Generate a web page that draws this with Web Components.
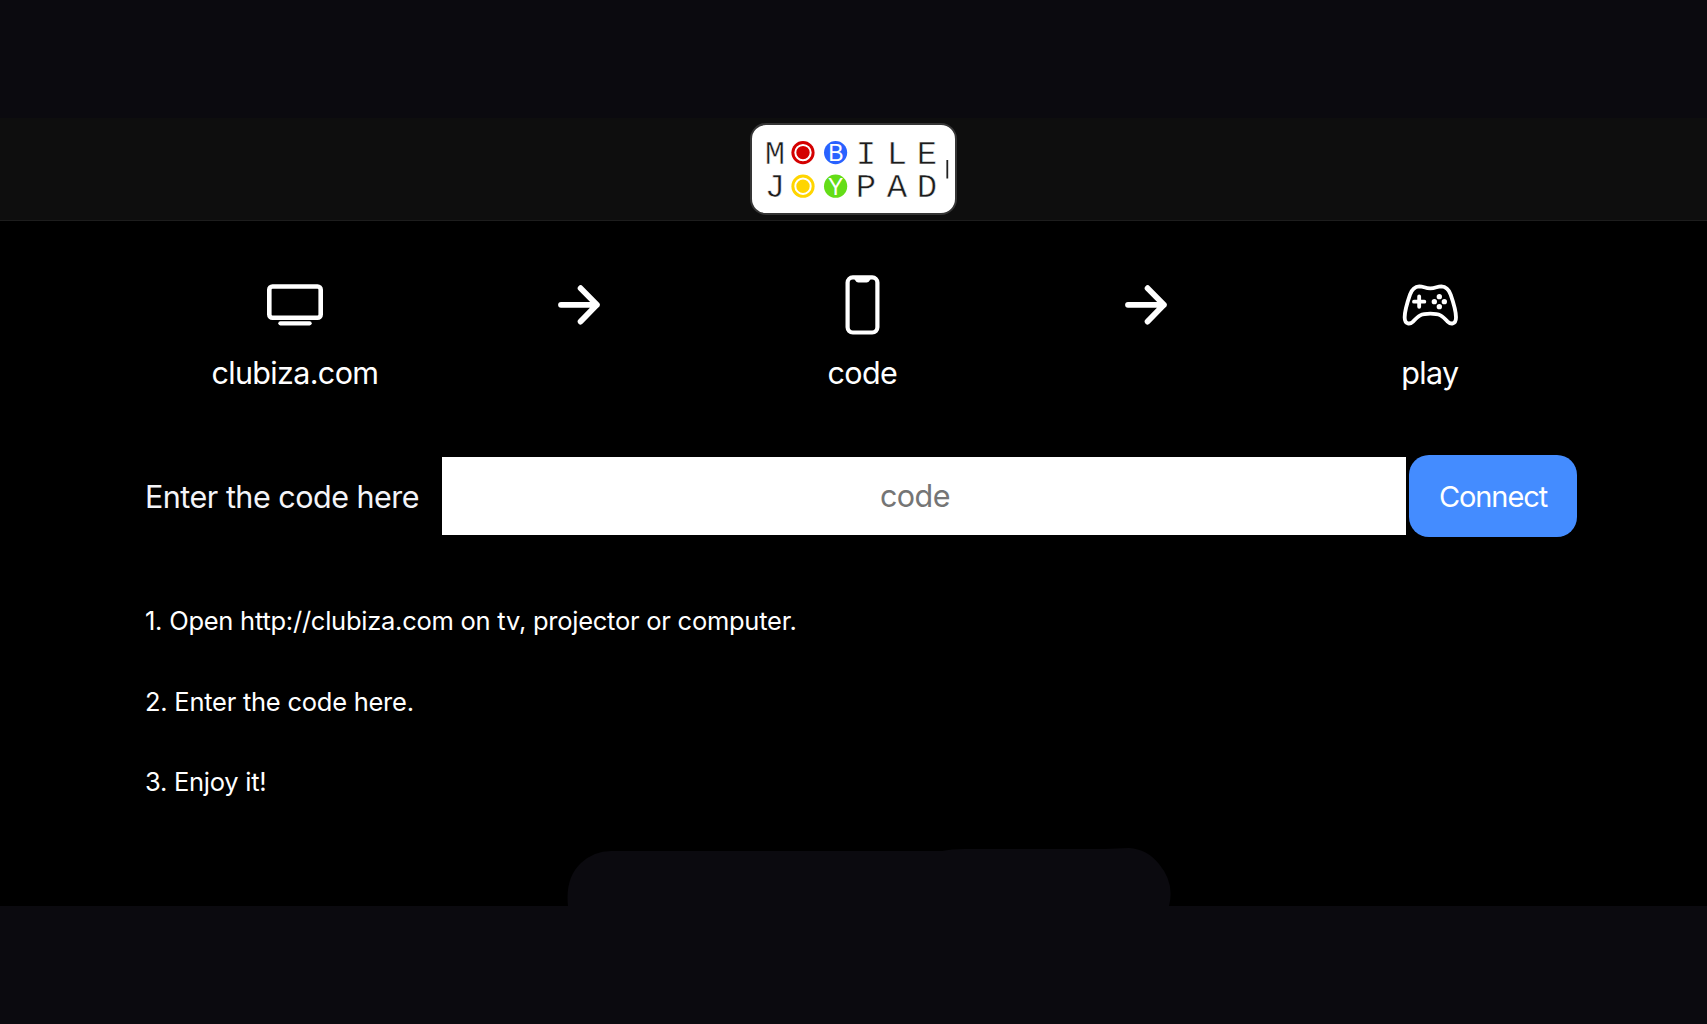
<!DOCTYPE html>
<html lang="en">
<head>
<meta charset="utf-8">
<title>Mobile Joypad</title>
<style>
  html, body {
    margin: 0;
    height: 100%;
    background: #0b0a0f;
    color: #fff;
    font-family: Inter, "Liberation Sans", sans-serif;
  }
</style>
</head>
<body>
<joypad-app></joypad-app>

<script>
const icons = {
  tv: `<svg width="64" height="64" viewBox="-32 -32 64 64" fill="none" stroke="#fff">
    <rect x="-25.7" y="-18.5" width="51.4" height="31.3" rx="3.2" stroke-width="4.6"/>
    <path d="M-14.6 18.3H14.6" stroke-width="4.2" stroke-linecap="round"/>
  </svg>`,
  arrow: `<svg width="64" height="64" viewBox="-32.3 -32 64 64" fill="none" stroke="#fff" stroke-width="5.8" stroke-linecap="round" stroke-linejoin="round">
    <path d="M-18.3 -.2H17.6M1.3 -16.8L17.6 -.2L1.3 16.6"/>
  </svg>`,
  phone: `<svg width="64" height="64" viewBox="-32.5 -32.3 64 64" fill="none" stroke="#fff">
    <rect x="-14.9" y="-27.9" width="29.8" height="55.1" rx="5.2" stroke-width="4.2"/>
    <path d="M-9 -27H9Q7.6 -26 7 -24.5Q6.2 -22.8 4.2 -22.8H-4.2Q-6.2 -22.8 -7 -24.5Q-7.6 -26 -9 -27Z" fill="#fff" stroke="none"/>
  </svg>`,
  pad: `<svg width="64" height="64" viewBox="55 38 192 192" fill="none" stroke="#fff">
    <path d="M152 84C136 84 132 78 119 78C101 79 95 91 91 103C83 126 75 150 75 171C75 194 92 192 101 183C116 166 124 160 152 160C180 160 188 166 203 183C212 192 229 194 229 171C229 150 221 126 213 103C209 91 203 79 185 78C172 78 168 84 152 84Z" stroke-width="11.5" stroke-linejoin="round"/>
    <path d="M103 124H134M118.5 108.5V139.5" stroke-width="11.5" stroke-linecap="round"/>
    <g fill="#fff" stroke="none">
      <circle cx="179" cy="109" r="8"/>
      <circle cx="164" cy="124" r="8"/>
      <circle cx="194" cy="124" r="8"/>
      <circle cx="179" cy="139" r="8"/>
    </g>
  </svg>`
};

class JoypadLogo extends HTMLElement {
  constructor() {
    super();
    this.attachShadow({ mode: 'open' });
  }

  connectedCallback() {
    this.shadowRoot.innerHTML = `
    <style>
      :host {
        display: block;
        box-sizing: border-box;
        width: 207px;
        height: 92px;
        border: 2px solid #353535;
        border-radius: 16px;
        background: #fff;
        overflow: hidden;
      }
      svg {
        display: block;
      }
      text {
        font-family: "Liberation Mono", monospace;
        font-size: 34px;
        text-anchor: middle;
        fill: #1c1c1c;
        stroke: #fff;
        stroke-width: .5px;
      }
      .face {
        font-family: "Liberation Sans", sans-serif;
        font-size: 23px;
        fill: #fff;
        stroke: none;
      }
    </style>
    <svg width="203" height="88" viewBox="752 125 203 88">
      <text x="775" y="164">M</text>
      <text x="866" y="164">I</text>
      <text x="897" y="164">L</text>
      <text x="927" y="164">E</text>
      <text x="775" y="197.4">J</text>
      <text x="866" y="197.4">P</text>
      <text x="897" y="197.4">A</text>
      <text x="927" y="197.4">D</text>
      <g stroke="#fff" stroke-width="2">
        <circle cx="803" cy="152.6" r="11.6" fill="#d40000" stroke="none"/>
        <circle cx="803" cy="152.6" r="7.7" fill="#d40000"/>
        <circle cx="803" cy="186.2" r="11.6" fill="#ffd500" stroke="none"/>
        <circle cx="803" cy="186.2" r="7.7" fill="#ffd500"/>
      </g>
      <circle cx="835.6" cy="152.6" r="11.6" fill="#2962ff"/>
      <circle cx="835.6" cy="186.2" r="11.6" fill="#64dd17"/>
      <text class="face" x="836" y="160.7">B</text>
      <text class="face" x="835.6" y="194.7">Y</text>
      <path d="M947.3 160V178.5" stroke="#222" stroke-width="1.8"/>
    </svg>
    `;
  }
}

class JoypadStep extends HTMLElement {
  constructor() {
    super();
    this.attachShadow({ mode: 'open' });
  }

  connectedCallback() {
    this.shadowRoot.innerHTML = `
    <style>
      :host {
        display: flex;
        flex-direction: column;
        align-items: center;
        gap: 16px;
        font-size: 30.5px;
        line-height: 40px;
        letter-spacing: -0.65px;
      }
      svg {
        display: block;
      }
    </style>
    ${icons[this.getAttribute('icon')]}
    <slot></slot>
    `;
  }
}

class JoypadForm extends HTMLElement {
  constructor() {
    super();
    this.attachShadow({ mode: 'open' });
  }

  connectedCallback() {
    this.shadowRoot.innerHTML = `
    <style>
      :host {
        display: flex;
        align-items: center;
        height: 82px;
      }
      label {
        width: 297px;
        font-size: 30.5px;
        letter-spacing: -0.5px;
        color: #f4f4f8;
        white-space: nowrap;
      }
      input {
        flex: 1;
        box-sizing: border-box;
        min-width: 0;
        height: 78px;
        margin: 0 3px 1px 0;
        padding: 0 18px 0 0;
        border: none;
        border-radius: 0;
        outline: 0;
        background: #fff;
        font: 30.5px Inter, sans-serif;
        letter-spacing: -0.5px;
        text-align: center;
      }
      input::placeholder {
        color: #757575;
      }
      button {
        width: 168px;
        height: 82px;
        padding: 0;
        border: none;
        border-radius: 20px;
        background: #448cff;
        color: #fff;
        font: 29px Inter, sans-serif;
        letter-spacing: -1.1px;
      }
    </style>
    <label for="code">Enter the code here</label>
    <input id="code" placeholder="code">
    <button>Connect</button>
    `;
  }
}

class JoypadApp extends HTMLElement {
  constructor() {
    super();
    this.attachShadow({ mode: 'open' });
  }

  connectedCallback() {
    this.shadowRoot.innerHTML = `
    <style>
      :host {
        display: flex;
        flex-direction: column;
        box-sizing: border-box;
        height: 1024px;
        padding: 118px 0;
        overflow: hidden;
      }
      header {
        display: flex;
        justify-content: center;
        box-sizing: border-box;
        height: 103px;
        padding-top: 5px;
        background: #0e0e0e;
        border-bottom: 1px solid #1d1d1d;
      }
      main {
        display: flex;
        flex-direction: column;
        flex: 1;
        padding: 52px 130px 0 145px;
        background: #000;
      }
      .steps {
        display: grid;
        grid-template-columns: repeat(5, 283.75px);
        margin-left: 8px;
        height: 182px;
      }
      ol {
        display: flex;
        flex-direction: column;
        gap: 40.7px;
        margin: 64px 0 0;
        padding: 0;
        list-style: none;
        font-size: 25.5px;
        line-height: 40px;
        letter-spacing: -0.25px;
      }
      .base {
        display: block;
        margin: auto 0 0 422px;
      }
    </style>
    <header><joypad-logo></joypad-logo></header>
    <main>
      <div class="steps">
        <joypad-step icon="tv">clubiza.com</joypad-step>
        <joypad-step icon="arrow"></joypad-step>
        <joypad-step icon="phone">code</joypad-step>
        <joypad-step icon="arrow"></joypad-step>
        <joypad-step icon="pad">play</joypad-step>
      </div>
      <joypad-form></joypad-form>
      <ol>
        <li>1. Open http://clubiza.com on tv, projector or computer.</li>
        <li>2. Enter the code here.</li>
        <li>3. Enjoy it!</li>
      </ol>
      <svg class="base" width="604" height="58" viewBox="0 0 604 58">
        <path d="M1 58Q-2 30 14 15Q27 3 44 3H375Q384 1 398 1H538L562 0Q580 1 592 16Q608 35 602 58Z" fill="#0b0a0f"/>
      </svg>
    </main>
    `;
  }
}

customElements.define('joypad-logo', JoypadLogo);
customElements.define('joypad-step', JoypadStep);
customElements.define('joypad-form', JoypadForm);
customElements.define('joypad-app', JoypadApp);
</script>
</body>
</html>
